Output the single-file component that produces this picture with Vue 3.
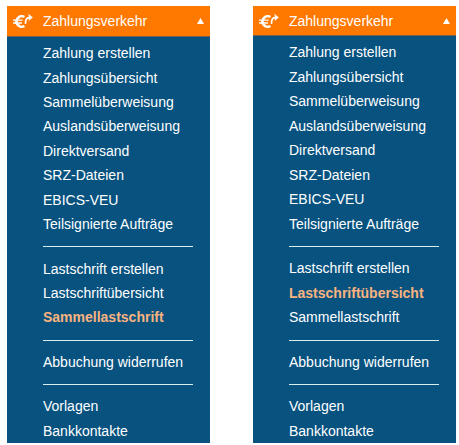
<script setup>
const groups = [
  [
    'Zahlung erstellen',
    'Zahlungsübersicht',
    'Sammelüberweisung',
    'Auslandsüberweisung',
    'Direktversand',
    'SRZ-Dateien',
    'EBICS-VEU',
    'Teilsignierte Aufträge',
  ],
  ['Lastschrift erstellen', 'Lastschriftübersicht', 'Sammellastschrift'],
  ['Abbuchung widerrufen'],
  ['Vorlagen', 'Bankkontakte'],
]
const menus = [
  { id: 'menu-a', active: 'Sammellastschrift' },
  { id: 'menu-b', active: 'Lastschriftübersicht' },
]
</script>

<template>
  <main class="page">
    <nav v-for="menu in menus" :key="menu.id" class="menu" :class="menu.id" aria-label="Zahlungsverkehr">
      <button type="button" class="head" aria-expanded="true" :aria-controls="menu.id">
        <svg class="euro" viewBox="0 0 20 16" aria-hidden="true">
          <path d="M11.4 4A5.1 5.3 0 1 0 11.4 13" fill="none" stroke="currentColor" stroke-width="2.6" />
          <path d="M0 7.2H9.6M0 10H9" fill="none" stroke="currentColor" stroke-width="1.3" />
          <path d="M12.6 10.8C12.2 6.4 13.6 4.6 17 4.4" fill="none" stroke="currentColor" stroke-width="1.7" />
          <path d="M15.6 1.2L19.6 4.4L15.8 7.6L16.4 4.4Z" fill="currentColor" stroke="currentColor" stroke-width="0.4" />
        </svg>
        <span class="title">Zahlungsverkehr</span>
        <svg class="caret" viewBox="0 0 7 6" aria-hidden="true">
          <path d="M3.5 0L7 6H0Z" fill="currentColor" />
        </svg>
      </button>
      <div :id="menu.id" class="list">
        <template v-for="(group, i) in groups" :key="i">
          <hr v-if="i > 0" class="line" />
          <a
            v-for="item in group"
            :key="item"
            href="#"
            class="item"
            :class="{ active: item === menu.active }"
            :aria-current="item === menu.active ? 'page' : undefined"
          >{{ item }}</a>
        </template>
      </div>
    </nav>
  </main>
</template>

<style>
body {
  background: #fff;
}
</style>

<style scoped>
.page {
  box-sizing: border-box;
  min-height: 100vh;
  display: grid;
  grid-template-columns: 1fr 1fr;
  gap: 43px;
  padding: 6px 3px 2px 7px;
  font-family: "Liberation Sans", Arial, sans-serif;
  font-size: 14px;
}
.menu {
  display: flex;
  flex-direction: column;
  background: #07527f;
  color: #fff;
}
.head {
  display: flex;
  align-items: center;
  height: 31px;
  padding: 0 6px;
  border: 0;
  border-bottom: 1px solid #77604b;
  background: #ff7900;
  color: #fff;
  font: inherit;
  text-align: left;
}
.menu-b .head {
  height: 30px;
}
.euro {
  width: 20px;
  height: 16px;
  margin-right: 10px;
}
.title {
  flex: 1;
}
.caret {
  width: 7px;
  height: 6px;
}
.list {
  flex: 1;
  display: flex;
  flex-direction: column;
  padding: 4px 17px 0 36px;
}
.item {
  flex: 1;
  display: flex;
  align-items: center;
  color: #fff;
  text-decoration: none;
  white-space: nowrap;
}
.active {
  color: #f9b380;
  font-weight: bold;
}
.line {
  width: 100%;
  height: 1px;
  margin: 10px 0 9px;
  border: 0;
  background: #d9efef;
}
</style>
